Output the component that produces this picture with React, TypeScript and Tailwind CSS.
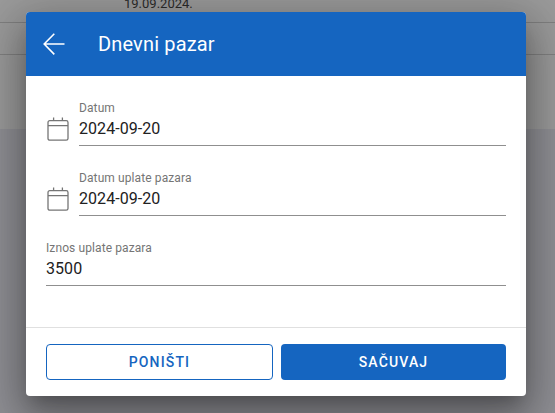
const font = { fontFamily: 'Roboto, sans-serif' };

function CalendarIcon() {
  return (
    <svg width="22" height="24" viewBox="0 0 22 24" fill="none" stroke="#757575" strokeWidth="1.3" className="shrink-0">
      <rect x="1" y="3.6" width="20" height="19.6" rx="1.8" />
      <path d="M1 8.6H21M6.6 0.6V3.6M15.4 0.6V3.6" />
    </svg>
  );
}

function Field({ label, value, icon }: { label: string; value: string; icon?: boolean }) {
  return (
    <div className="flex items-end h-[70px]">
      {icon && (
        <div className="w-[33px] shrink-0 pl-[1px] pb-[5px]">
          <CalendarIcon />
        </div>
      )}
      <div className="flex-1 border-b border-[#8f8f8f] h-[45px]">
        <div className="text-[12px] leading-[14px] tracking-[0.1px] text-[#757575]">{label}</div>
        <div className="text-[16px] leading-[19px] mt-[4px] tracking-[0.05px] text-[#212121]">{value}</div>
      </div>
    </div>
  );
}

export default function App() {
  return (
    <div className="relative w-[555px] h-[413px] overflow-hidden bg-[#8f8f94]" style={font}>
      {/* page behind the overlay */}
      <div className="h-[129px] bg-[#9a9a9a]">
        <div className="h-[23px] overflow-hidden border-b border-[#7f7f7f] pl-[124px] text-[13px] leading-[15px] text-[#2a2a2a]">
          <span className="block -mt-[4px]">19.09.2024.</span>
        </div>
        <div className="h-[32px] border-b border-[#808080]" />
      </div>

      {/* dialog */}
      <div className="absolute left-[26px] top-[12px] w-[500px] h-[384px] bg-white rounded-[4px] overflow-hidden shadow-[0_11px_15px_-7px_rgba(0,0,0,0.2),0_24px_38px_3px_rgba(0,0,0,0.2),0_9px_46px_8px_rgba(0,0,0,0.22)] flex flex-col">
        <div className="h-[64px] bg-[#1565c0] flex items-center pl-[16px] shrink-0">
          <svg width="24" height="24" viewBox="0 0 24 24" fill="none" stroke="white" strokeWidth="1.6" className="mr-[32px]">
            <path d="M22.5 12H2.2M12.3 1.8L2.2 12L12.3 22.4" />
          </svg>
          <span className="text-white text-[20px] tracking-[0.15px]">Dnevni pazar</span>
        </div>
        <div className="flex-1 px-[20px]">
          <Field label="Datum" value="2024-09-20" icon />
          <Field label="Datum uplate pazara" value="2024-09-20" icon />
          <Field label="Iznos uplate pazara" value="3500" />
        </div>
        <div className="h-[69px] border-t border-[#e0e0e0] px-[20px] pt-[16px] flex gap-[8px] shrink-0">
          <button className="w-[227px] h-[36px] border border-[#1565c0] rounded-[4px] text-[#1565c0] text-[14px] font-medium tracking-[1.15px]">
            PONIŠTI
          </button>
          <button className="w-[225px] h-[36px] bg-[#1565c0] rounded-[4px] text-white text-[14px] font-medium tracking-[1.15px]">
            SAČUVAJ
          </button>
        </div>
      </div>
    </div>
  );
}
